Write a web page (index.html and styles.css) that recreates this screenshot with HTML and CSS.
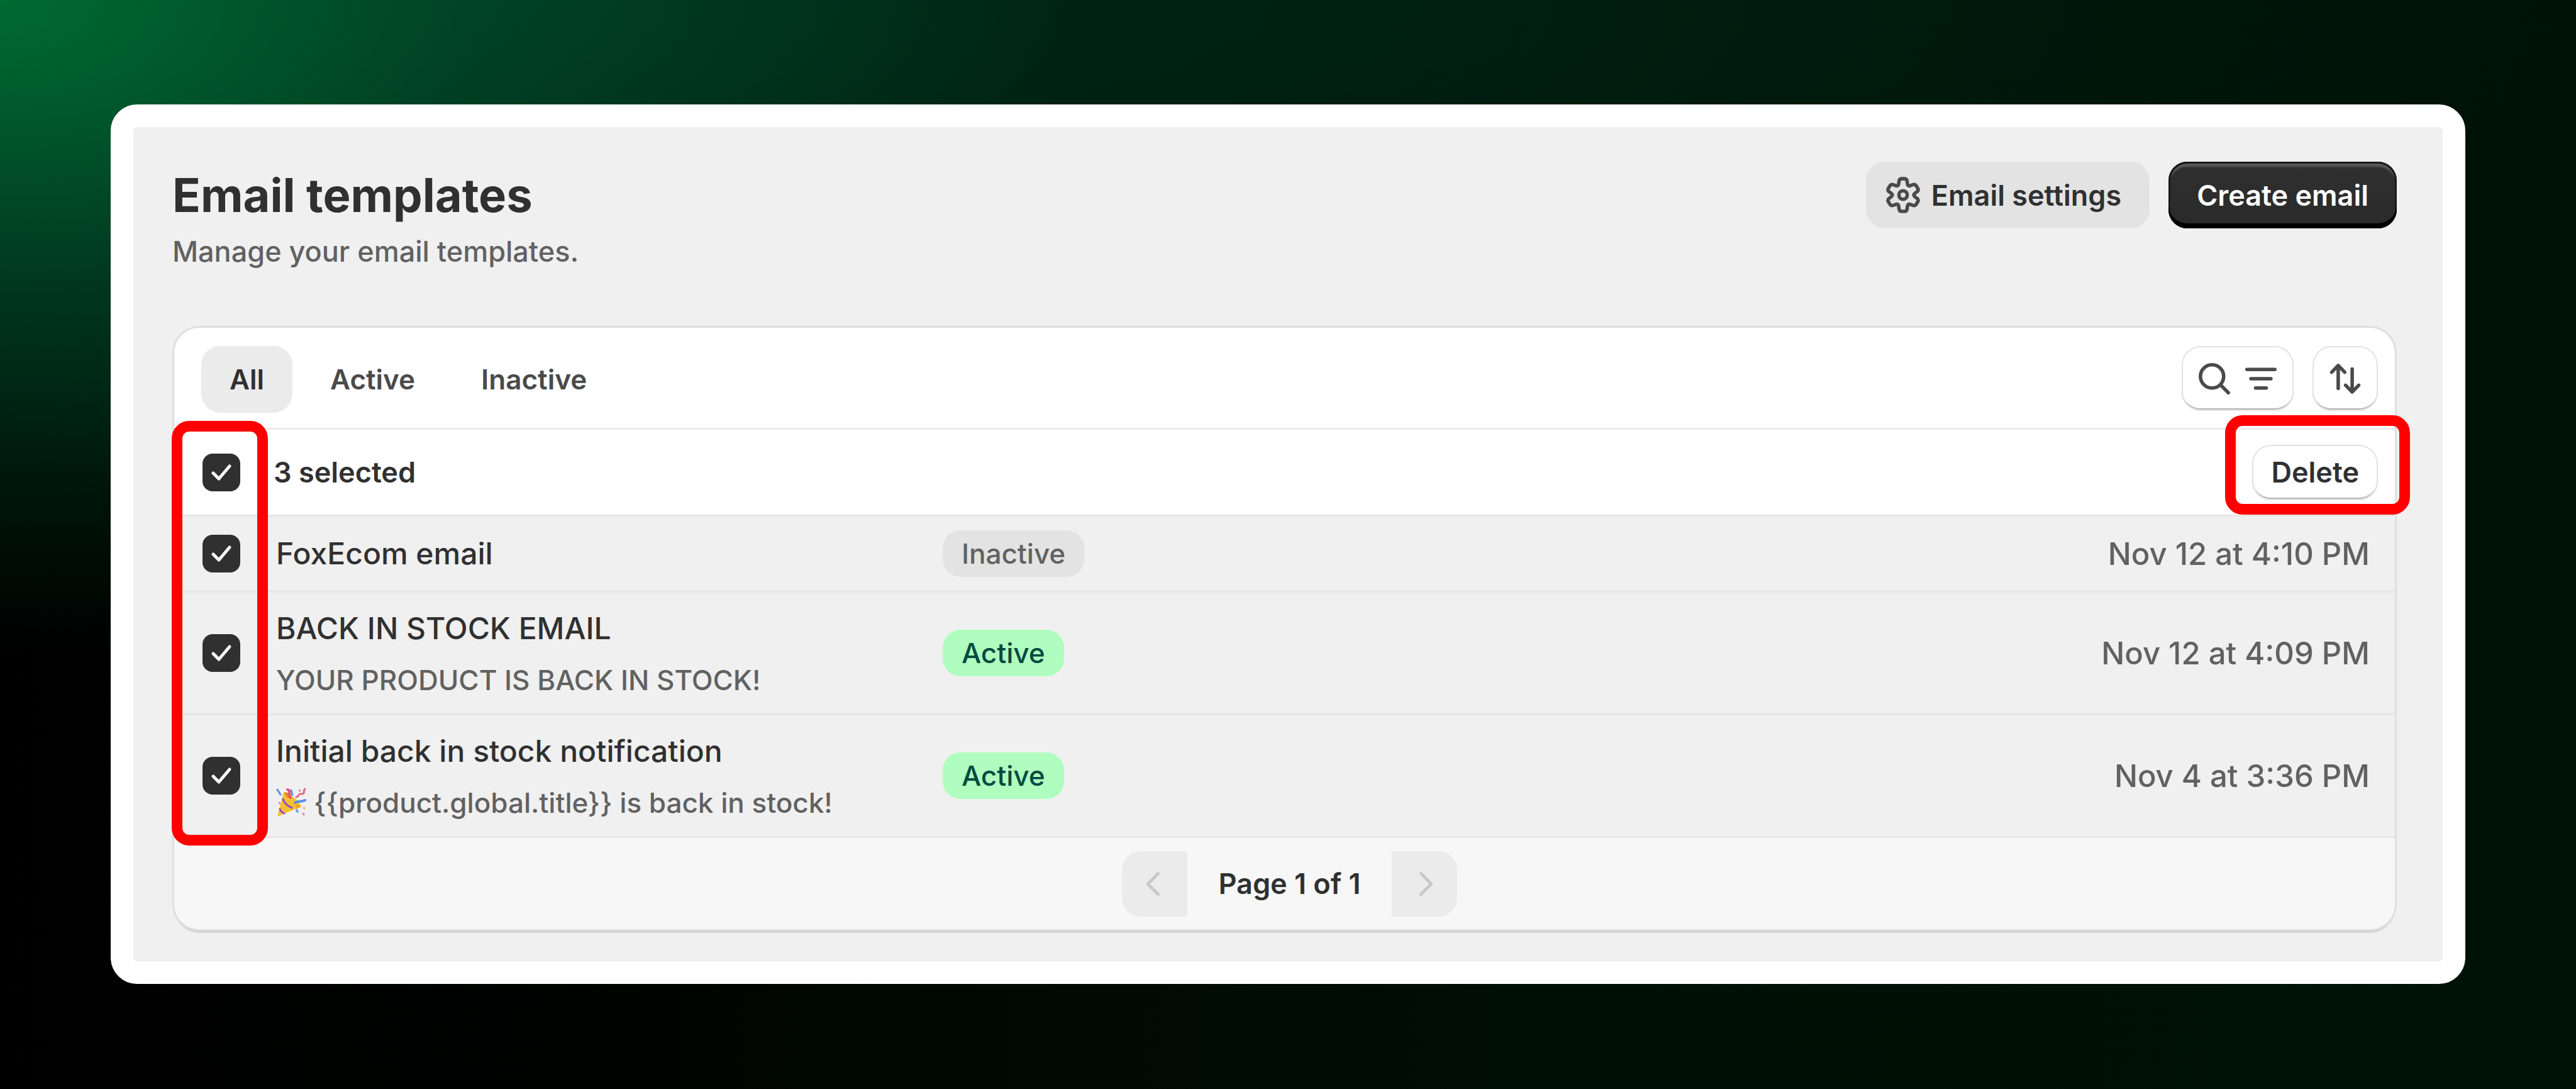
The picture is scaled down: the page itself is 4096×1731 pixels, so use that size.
FILE: index.html
```
<!DOCTYPE html>
<html lang="en">
<head>
    <meta charset="utf-8" />
    <title>Email templates</title>
    <link rel="stylesheet" href="styles.css">
</head>
<body>
    <main class="frame">
        <header class="page-header">
            <div>
                <h1>Email templates</h1>
                <p class="subtitle">Manage your email templates.</p>
            </div>
            <div class="actions">
                <button type="button" class="btn btn-settings">
                    <svg class="icon" viewBox="0 0 20 20" fill="none" stroke="#4a4a4a" stroke-width="1.5" stroke-linejoin="round">
                        <path d="M8.3 3.9 Q8.5 3 9.4 3 H10.6 Q11.5 3 11.7 3.9 L11.9 5.3 Q12.1 6.3 13.1 6 L14.1 5.6 Q15.1 5.2 15.7 6.1 L16.3 7.1 Q16.8 8 16 8.6 L15 9.3 Q14.3 10 15 10.7 L16 11.4 Q16.8 12 16.3 12.9 L15.7 13.9 Q15.1 14.8 14.1 14.4 L13.1 14 Q12.1 13.7 11.9 14.7 L11.7 16.1 Q11.5 17 10.6 17 H9.4 Q8.5 17 8.3 16.1 L8.1 14.7 Q7.9 13.7 6.9 14 L5.9 14.4 Q4.9 14.8 4.3 13.9 L3.7 12.9 Q3.2 12 4 11.4 L5 10.7 Q5.7 10 5 9.3 L4 8.6 Q3.2 8 3.7 7.1 L4.3 6.1 Q4.9 5.2 5.9 5.6 L6.9 6 Q7.9 6.3 8.1 5.3 Z" />
                        <circle cx="10" cy="10" r="1.8" />
                    </svg>
                    Email settings
                </button>
                <button type="button" class="btn btn-primary">Create email</button>
            </div>
        </header>

        <section class="card">
            <div class="toolbar">
                <div class="tabs">
                    <button type="button" class="tab selected">All</button>
                    <button type="button" class="tab">Active</button>
                    <button type="button" class="tab">Inactive</button>
                </div>
                <div class="tools">
                    <button type="button" class="tool" aria-label="Search and filter">
                        <svg class="icon" viewBox="0 0 20 20" fill="none" stroke="#4a4a4a" stroke-width="1.5" stroke-linecap="round">
                            <circle cx="9" cy="9" r="5" />
                            <path d="M12.7 12.7 L16 16" />
                        </svg>
                        <svg class="icon" viewBox="0 0 20 20" fill="none" stroke="#4a4a4a" stroke-width="1.5" stroke-linecap="round">
                            <path d="M4 6 H16 M5.7 10 H14.3 M7.7 14 H12.3" />
                        </svg>
                    </button>
                    <button type="button" class="tool" aria-label="Sort">
                        <svg class="icon" viewBox="0 0 20 20" fill="none" stroke="#4a4a4a" stroke-width="1.5" stroke-linecap="round" stroke-linejoin="round">
                            <path d="M7 14.2 V4.5 M4.2 7.2 L7 4.3 L9.8 7.2 M13 5.8 V15.5 M10.2 12.8 L13 15.7 L15.8 12.8" />
                        </svg>
                    </button>
                </div>
            </div>

            <div class="bulk">
                <label class="bulk-label">
                    <input type="checkbox" class="check" checked />
                    3 selected
                </label>
                <button type="button" class="btn-delete">Delete</button>
                <div class="mark mark-delete"></div>
            </div>

            <table class="list">
                <tr>
                    <td class="col-check"><input type="checkbox" class="check" aria-label="Select FoxEcom email" checked /></td>
                    <td class="col-name"><div class="name">FoxEcom email</div></td>
                    <td><span class="badge">Inactive</span></td>
                    <td class="col-date">Nov 12 at 4:10 PM</td>
                </tr>
                <tr>
                    <td class="col-check"><input type="checkbox" class="check" aria-label="Select BACK IN STOCK EMAIL" checked /></td>
                    <td class="col-name">
                        <div class="name">BACK IN STOCK EMAIL</div>
                        <div class="subject">YOUR PRODUCT IS BACK IN STOCK!</div>
                    </td>
                    <td><span class="badge active">Active</span></td>
                    <td class="col-date">Nov 12 at 4:09 PM</td>
                </tr>
                <tr>
                    <td class="col-check"><input type="checkbox" class="check" aria-label="Select Initial back in stock notification" checked /></td>
                    <td class="col-name">
                        <div class="name">Initial back in stock notification</div>
                        <div class="subject">
                            <svg class="popper" viewBox="0 0 48 48" fill="none" stroke-linecap="round" stroke-width="4">
                                <path d="M2 46 L12 8 C20 8 38 22 40 30 Z" fill="#f5c02c" />
                                <path d="M12 8 C18 5 24 12 24 18 L18 16 Z" fill="#e58a25" />
                                <path d="M31 26 L40 30 L32 34 Z" fill="#f0a020" />
                                <path d="M11 18 C13 25 18 29 25 32 M6 34 C7 37 9 39 13 41" stroke="#9a50c4" stroke-width="3" />
                                <path d="M18 3 C24 5 19 10 23 16" stroke="#ea4f6c" />
                                <path d="M2 3 L7 11 M24 4 L26 12" stroke="#5b8ee6" stroke-width="3" />
                                <path d="M30 24 C35 20 38 24 46 20" stroke="#5b8ee6" />
                                <path d="M32 15 C38 14 34 9 41 10 C47 10 42 5 46 2" stroke="#dd6685" stroke-width="3" />
                                <path d="M33 36 L34 38" stroke="#7da3e0" />
                                <path d="M43 41 L44 43 M37 4 L38 5 M5 24 L6 25" stroke="#e58ba5" stroke-width="3" />
                                <path d="M44 32 L45 33" stroke="#e0c04c" stroke-width="3" />
                            </svg>
                            {{product.global.title}} is back in stock!
                        </div>
                    </td>
                    <td><span class="badge active">Active</span></td>
                    <td class="col-date">Nov 4 at 3:36 PM</td>
                </tr>
            </table>
            <div class="mark mark-checks"></div>

            <nav class="pager">
                <button type="button" class="page-btn prev" aria-label="Previous page" disabled>
                    <svg class="icon" viewBox="0 0 20 20" fill="none" stroke="#c8c8c8" stroke-width="1.3" stroke-linecap="round" stroke-linejoin="round"><path d="M11.5 5.5 L7.1 10 L11.5 14.5" /></svg>
                </button>
                <span>Page 1 of 1</span>
                <button type="button" class="page-btn next" aria-label="Next page" disabled>
                    <svg class="icon" viewBox="0 0 20 20" fill="none" stroke="#c8c8c8" stroke-width="1.3" stroke-linecap="round" stroke-linejoin="round"><path d="M8.5 5.5 L12.9 10 L8.5 14.5" /></svg>
                </button>
            </nav>
        </section>
    </main>
</body>
</html>
```
FILE: styles.css
```
* {
    box-sizing: border-box;
}
body {
    margin: 0;
    min-height: 100vh;
    padding: 166px 176px;
    background-color: #000000;
    background-image:
        radial-gradient(ellipse 42% 60% at 0 0, rgba(0, 115, 55, 0.9), rgba(0, 85, 45, 0.55) 45%, rgba(0, 50, 25, 0) 100%),
        radial-gradient(ellipse 80% 45% at 20% 0, rgba(0, 60, 35, 0.7), rgba(0, 40, 20, 0) 100%),
        linear-gradient(90deg, #000000 0%, #000401 25%, #000f05 60%, #001206 100%);
    font-family: Inter, "Liberation Sans", sans-serif;
    font-size: 45px;
    font-weight: 450;
    color: #303030;
}
button {
    font: inherit;
    font-weight: 600;
    color: #303030;
    border: none;
    padding: 0;
    display: flex;
    align-items: center;
    justify-content: center;
}
h1, p {
    margin: 0;
}
.icon {
    width: 74px;
    height: 74px;
    display: block;
}

/* white frame and page */
.frame {
    border: 36px solid #ffffff;
    border-radius: 42px;
    background-color: #f0f0f0;
    padding: 55px 73px 51px 62px;
}
.page-header {
    display: flex;
    justify-content: space-between;
    align-items: flex-start;
    margin-bottom: 84px;
}
h1 {
    font-size: 74px;
    font-weight: 700;
    line-height: 106px;
}
.subtitle {
    line-height: 74px;
    color: #616161;
}
.actions {
    display: flex;
    gap: 30px;
}
.btn {
    height: 106px;
    padding: 0 45px;
    border-radius: 30px;
}
.btn-settings {
    background-color: #e3e3e3;
    padding-left: 22px;
    gap: 8px;
}
.btn-primary {
    color: #ffffff;
    background: linear-gradient(180deg, #303030, #2a2a2a);
    box-shadow: inset 0 -8px 0 #000000, inset 0 0 0 3px #1a1a1a, inset 0 8px 3px #5a5a5a;
}

/* list card */
.card {
    position: relative;
    margin: 0 3px;
    background-color: #ffffff;
    border-radius: 40px;
    box-shadow: 0 0 0 3px #dfdfdf, 0 5px 3px #c6c6c6;
}
.toolbar {
    display: flex;
    justify-content: space-between;
    align-items: flex-start;
    height: 162px;
    padding: 29px 27px 0 43px;
    border-bottom: 3px solid #ebebeb;
}
.tabs {
    display: flex;
    gap: 15px;
}
.tab {
    height: 106px;
    padding: 0 45px;
    border-radius: 30px;
    background-color: transparent;
    font-size: 44px;
    color: #4a4a4a;
}
.tab.selected {
    background-color: #ebebeb;
    color: #303030;
}
.tools {
    display: flex;
    gap: 30px;
}
.tool {
    height: 103px;
    padding: 0 15px;
}
.tool, .btn-delete {
    border-radius: 30px;
    background-color: #ffffff;
    box-shadow: inset 0 0 0 2px #e3e3e3, inset 0 -4px 0 #b5b5b5;
}
.bulk {
    position: relative;
    display: flex;
    justify-content: space-between;
    align-items: center;
    height: 135px;
    padding: 0 27px 0 45px;
}
.bulk-label {
    display: flex;
    align-items: center;
    gap: 53px;
    font-weight: 600;
}
.btn-delete {
    height: 88px;
    padding: 0 30px;
}
.check {
    appearance: none;
    display: block;
    width: 60px;
    height: 60px;
    margin: 0;
    border-radius: 16px;
    background: #303030 url("data:image/svg+xml,%3Csvg xmlns='http://www.w3.org/2000/svg' viewBox='0 0 60 60' fill='none' stroke='white' stroke-width='5' stroke-linecap='round' stroke-linejoin='round'%3E%3Cpath d='M17 31 L26 40 L43 20'/%3E%3C/svg%3E");
}

/* rows */
.list {
    width: 100%;
    border-collapse: collapse;
    background-color: #f0f0f0;
    font-size: 48px;
}
.list td {
    padding: 0;
    height: 121px;
    border-top: 3px solid #e6e6e6;
}
.list .col-check {
    width: 162px;
    padding-left: 45px;
}
.list .col-name {
    width: 1060px;
    padding: 14px 0;
}
.name {
    line-height: 86px;
}
.subject {
    display: flex;
    align-items: center;
    gap: 12px;
    font-size: 44px;
    line-height: 78px;
    color: #616161;
}
.popper {
    width: 48px;
    height: 48px;
}
.badge {
    display: inline-block;
    padding: 0 30px;
    border-radius: 28px;
    font-size: 44px;
    font-weight: 500;
    line-height: 74px;
    color: #616161;
    background-color: #e3e3e3;
    vertical-align: middle;
}
.badge.active {
    color: #014b40;
    background-color: #affebf;
}
.list .col-date {
    padding-right: 40px;
    font-size: 49px;
    text-align: right;
    color: #616161;
}

/* pagination */
.pager {
    display: flex;
    justify-content: center;
    align-items: center;
    gap: 49px;
    height: 148px;
    padding-left: 16px;
    border-top: 3px solid #e6e6e6;
    border-radius: 0 0 40px 40px;
    background-color: #f7f7f7;
    font-weight: 600;
}
.page-btn {
    width: 104px;
    height: 104px;
    background-color: #ebebeb;
}
.prev {
    border-radius: 30px 0 0 30px;
}
.next {
    border-radius: 0 30px 30px 0;
}

/* red highlight boxes over the card */
.mark {
    position: absolute;
    border: 17px solid #ff0000;
    border-radius: 28px;
    pointer-events: none;
}
.mark-delete {
    top: -23px;
    right: -24px;
    width: 294px;
    height: 158px;
}
.mark-checks {
    top: 148px;
    bottom: 133px;
    left: -4px;
    width: 153px;
}
```
